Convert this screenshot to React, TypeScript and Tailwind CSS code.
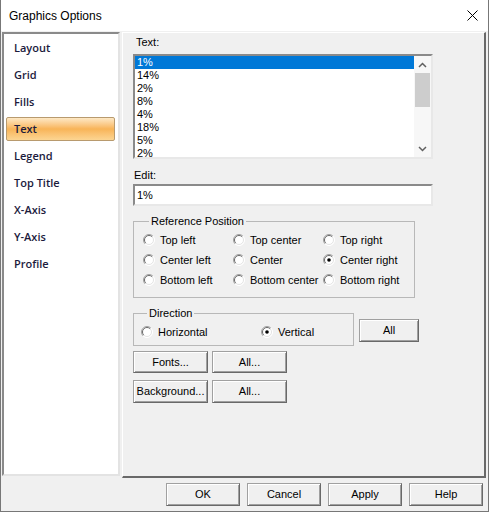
import React from 'react';

const NAV = ['Layout', 'Grid', 'Fills', 'Text', 'Legend', 'Top Title', 'X-Axis', 'Y-Axis', 'Profile'];
const VALUES = ['1%', '14%', '2%', '8%', '4%', '18%', '5%', '2%'];
const POSITIONS = [
  'Top left', 'Top center', 'Top right',
  'Center left', 'Center', 'Center right',
  'Bottom left', 'Bottom center', 'Bottom right',
];

// Classic 3D radio button drawn as an svg
function RadioDot({ checked }: { checked?: boolean }) {
  return (
    <svg width="12" height="12" viewBox="0 0 12 12" className="shrink-0">
      <circle cx="6" cy="6" r="5.5" fill="#fff" />
      <path d="M9.9 2.1 A5.5 5.5 0 0 0 2.1 9.9" stroke="#a0a0a0" fill="none" />
      <path d="M9.2 2.8 A4.5 4.5 0 0 0 2.8 9.2" stroke="#696969" fill="none" />
      <path d="M9.9 2.1 A5.5 5.5 0 0 1 2.1 9.9" stroke="#ffffff" fill="none" />
      <path d="M9.2 2.8 A4.5 4.5 0 0 1 2.8 9.2" stroke="#e3e3e3" fill="none" />
      {checked && <circle cx="6" cy="6" r="1.8" fill="#000" />}
    </svg>
  );
}

function Radio({ label, checked }: { label: string; checked?: boolean }) {
  return (
    <div className="flex items-center gap-[5px] h-[20px]">
      <RadioDot checked={checked} />
      <span>{label}</span>
    </div>
  );
}

function Button({ label, className = '' }: { label: string; className?: string }) {
  return (
    <div
      className={`flex items-center justify-center bg-[#f0f0f0] border border-t-[#a0a0a0] border-l-[#a0a0a0] border-r-[#696969] border-b-[#696969] shadow-[inset_1px_1px_0_#ffffff,inset_-1px_-1px_0_#a0a0a0] text-black ${className}`}
    >
      {label}
    </div>
  );
}

export default function App() {
  return (
    <div
      className="w-[489px] h-[512px] bg-[#f0f0f0] border-x border-b border-[#777777] flex flex-col text-[11px] text-black overflow-hidden"
      style={{ fontFamily: '"Liberation Sans", Arial, sans-serif' }}
    >
      {/* Title bar */}
      <div className="h-[31px] bg-white flex items-center justify-between pl-[8px] pr-[10px] shrink-0">
        <span className="text-[12px]">Graphics Options</span>
        <svg width="11" height="11" viewBox="0 0 11 11">
          <path d="M0.5 0.5 L10.5 10.5 M10.5 0.5 L0.5 10.5" stroke="#000" strokeWidth="1" />
        </svg>
      </div>

      {/* Body */}
      <div className="flex flex-row pt-[1px] pl-[1px] h-[447px] shrink-0">
        {/* Left nav */}
        <div className="w-[118px] h-[444px] bg-white border-2 border-t-[#8a8a8a] border-l-[#8a8a8a] border-r-[#e3e3e3] border-b-[#e3e3e3] pt-[2px] flex flex-col gap-[3px]">
          {NAV.map(item => (
            <div
              key={item}
              className={`ml-[2px] w-[109px] h-[24px] flex items-center pl-[7px] text-[11px] font-semibold text-[#1c1b3d] rounded-[2px] border ${
                item === 'Text'
                  ? 'border-[#b89a6e] bg-gradient-to-b from-[#fde8c4] via-[#f8b457] to-[#fcd592]'
                  : 'border-transparent'
              }`}
              style={{ fontFamily: '"Open Sans", sans-serif' }}
            >
              {item}
            </div>
          ))}
        </div>

        {/* Right panel */}
        <div className="ml-[2px] w-[364px] h-[446px] border-l border-t border-l-white border-t-white border-r-2 border-b-2 border-r-[#696969] border-b-[#696969] pl-[10px] pt-[2px] flex flex-col">
          <div className="h-[14px] leading-[14px] pl-[3px]">Text:</div>

          {/* Listbox */}
          <div className="mt-[5px] w-[300px] h-[105px] bg-white border-2 border-t-[#8a8a8a] border-l-[#8a8a8a] border-r-[#e8e8e8] border-b-[#e8e8e8] flex flex-row overflow-hidden">
            <div className="flex-1 flex flex-col overflow-hidden">
              {VALUES.map((v, i) => (
                <div
                  key={i}
                  className={`h-[13px] leading-[13px] pl-[2px] shrink-0 ${i === 0 ? 'bg-[#0078d7] text-white' : ''}`}
                >
                  {v}
                </div>
              ))}
            </div>
            <div className="w-[17px] bg-[#f7f7f7] flex flex-col items-center">
              <div className="h-[17px] flex items-center justify-center">
                <svg width="9" height="6" viewBox="0 0 9 6">
                  <path d="M1 5 L4.5 1.5 L8 5" stroke="#606060" strokeWidth="1.5" fill="none" />
                </svg>
              </div>
              <div className="w-[15px] h-[34px] bg-[#cdcdcd]" />
              <div className="flex-1" />
              <div className="h-[17px] flex items-center justify-center">
                <svg width="9" height="6" viewBox="0 0 9 6">
                  <path d="M1 1 L4.5 4.5 L8 1" stroke="#606060" strokeWidth="1.5" fill="none" />
                </svg>
              </div>
            </div>
          </div>

          <div className="mt-[9px] h-[14px] leading-[14px] pl-[1px]">Edit:</div>
          <div className="mt-[2px] w-[300px] h-[22px] bg-white border-2 border-t-[#8a8a8a] border-l-[#8a8a8a] border-r-[#e8e8e8] border-b-[#e8e8e8] flex items-center pl-[2px]">
            1%
          </div>

          {/* Reference position */}
          <fieldset className="mt-[8px] w-[282px] border border-[#b8b8b8] pl-[9px] pb-[7px]">
            <legend className="ml-[6px] px-[2px] leading-[14px]">Reference Position</legend>
            <div className="grid grid-cols-[90px_90px_90px] pt-[2px]">
              {POSITIONS.map(p => (
                <Radio key={p} label={p} checked={p === 'Center right'} />
              ))}
            </div>
          </fieldset>

          {/* Direction + All */}
          <div className="mt-[8px] flex flex-row items-start">
            <fieldset className="w-[221px] border border-[#b8b8b8] pl-[7px] pb-[3px]">
              <legend className="ml-[6px] px-[2px] leading-[14px]">Direction</legend>
              <div className="grid grid-cols-[120px_90px] pt-[2px]">
                <Radio label="Horizontal" />
                <Radio label="Vertical" checked />
              </div>
            </fieldset>
            <Button label="All" className="ml-[5px] mt-[13px] w-[60px] h-[23px]" />
          </div>

          <div className="mt-[5px] flex flex-row gap-[4px]">
            <Button label="Fonts..." className="w-[75px] h-[22px]" />
            <Button label="All..." className="w-[75px] h-[22px]" />
          </div>
          <div className="mt-[7px] flex flex-row gap-[4px]">
            <Button label="Background..." className="w-[75px] h-[23px]" />
            <Button label="All..." className="w-[75px] h-[23px]" />
          </div>
        </div>
      </div>

      {/* Bottom buttons */}
      <div className="h-[32px] flex flex-row justify-end items-start pt-[5px] pr-[5px] gap-[7px]">
        <Button label="OK" className="w-[74px] h-[23px]" />
        <Button label="Cancel" className="w-[74px] h-[23px]" />
        <Button label="Apply" className="w-[74px] h-[23px]" />
        <Button label="Help" className="w-[74px] h-[23px]" />
      </div>
    </div>
  );
}
